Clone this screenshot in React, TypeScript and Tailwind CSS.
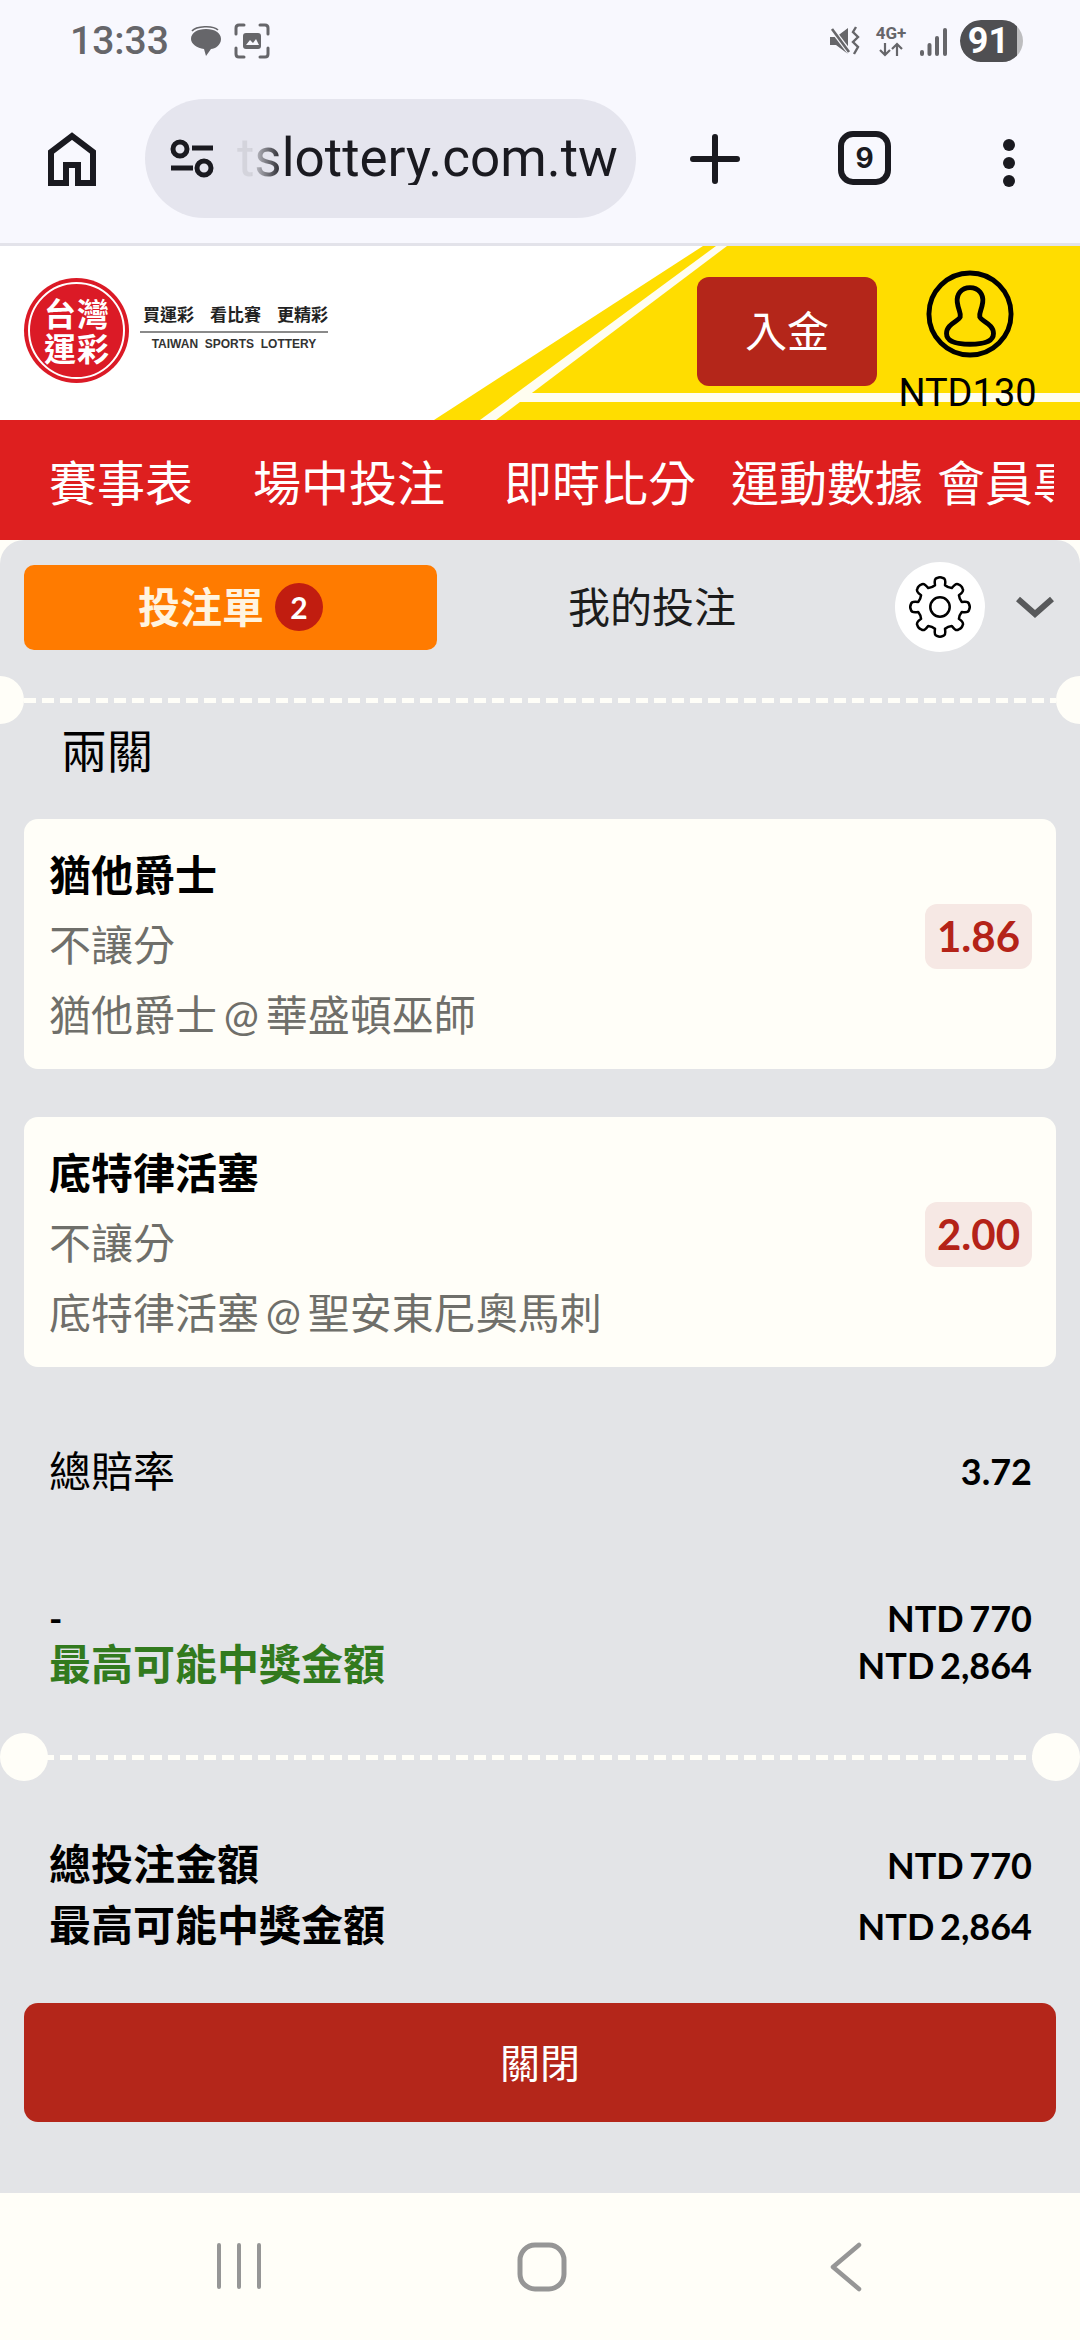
import React from "react";

const gearPath = (() => {
  const c = 34;
  const n = 8;
  let d = "";
  for (let i = 0; i < n; i++) {
    const a = (i * 2 * Math.PI) / n - Math.PI / 2;
    const pt = (r: number, off: number) => {
      const t = a + (off * Math.PI) / 180;
      return `${(c + r * Math.cos(t)).toFixed(2)} ${(c + r * Math.sin(t)).toFixed(2)}`;
    };
    d += (i === 0 ? "M" : "L") + pt(23, -13) + " ";
    d += "Q" + pt(30, -12) + " " + pt(30, -6) + " ";
    d += "Q" + pt(31.5, 0) + " " + pt(30, 6) + " ";
    d += "Q" + pt(30, 12) + " " + pt(23, 13) + " ";
    d += "Q" + pt(21.5, 22.5) + " " + pt(23, 32) + " ";
  }
  return d + "Z";
})();

function Dashed() {
  return (
    <div className="h-[5px] mx-[24px] bg-[repeating-linear-gradient(90deg,#fffef8_0_12px,transparent_12px_18px)]" />
  );
}

function Card({ team, line, odds }: { team: string; line: string; odds: string }) {
  return (
    <div className="mx-[24px] h-[250px] rounded-[14px] bg-[#fffef8] pl-[25px] pr-[24px] pt-[21px] flex justify-between">
      <div>
        <div className="h-[70px] leading-[70px] text-[42px] font-bold text-black">{team}</div>
        <div className="h-[70px] leading-[70px] text-[42px] text-[#6f6f6a]">不讓分</div>
        <div className="h-[70px] leading-[70px] text-[42px] text-[#6f6f6a] [word-spacing:-4px]">{line}</div>
      </div>
      <div className="mt-[64px] h-[65px] w-[107px] rounded-[12px] bg-[#f6e8e4] flex items-center justify-center text-[42px] font-bold text-[#b42318]">
        {odds}
      </div>
    </div>
  );
}

export default function App() {
  return (
    <div className="w-[1080px] h-[2340px] overflow-hidden flex flex-col bg-[#fffef8] font-['Lato','Noto_Sans_CJK_TC',sans-serif]">
      {/* status bar */}
      <div className="h-[62px] shrink-0 bg-[#f8f8fe] flex items-center pl-[70px] pr-[57px] pt-[20px] font-['Roboto',sans-serif] text-[#66666a]">
        <span className="text-[39px] font-medium leading-none">13:33</span>
        <svg className="ml-[20px]" width="34" height="34" viewBox="0 0 34 34">
          <path d="M3 7 C7 2 24 1 29 6" fill="none" stroke="#66666a" strokeWidth="1.6" />
          <path d="M17 5 C26 5 32 9 32 15 C32 21 26 25 22 25 L17 32 L15 25 C8 24 2 20 2 15 C2 9 8 5 17 5Z" fill="#66666a" />
        </svg>
        <svg className="ml-[11px]" width="36" height="36" viewBox="0 0 36 36" fill="none">
          <path d="M2 11 V5 Q2 2 5 2 H10 M26 2 H31 Q34 2 34 5 V11 M34 25 V31 Q34 34 31 34 H26 M10 34 H5 Q2 34 2 31 V25" stroke="#66666a" strokeWidth="3" strokeLinecap="round" />
          <rect x="9" y="10" width="18" height="16" rx="3" fill="#66666a" />
          <path d="M12 22 L16 17 L19 20 L22 16 L25 22Z" fill="#f8f8fe" />
        </svg>
        <div className="flex-1" />
        <svg width="32" height="32" viewBox="0 0 32 32" fill="none">
          <path d="M1 12 H7 L19 3 V29 L7 20 H1Z" fill="#66666a" />
          <path d="M2 3 L21 28" stroke="#f8f8fe" strokeWidth="5" />
          <path d="M3 4 L20 27" stroke="#66666a" strokeWidth="2.6" />
          <path d="M27 2 L24 7 L29 12 L24 17 L29 22 L25 29" stroke="#66666a" strokeWidth="2.4" />
        </svg>
        <div className="ml-[13px] w-[34px] flex flex-col items-center text-[#66666a]">
          <span className="text-[17px] font-bold leading-[17px]">4G+</span>
          <svg width="28" height="15" viewBox="0 0 26 15" fill="none" stroke="#66666a" strokeWidth="2.2">
            <path d="M7 1 V13 M2 8 L7 13 L12 8 M19 14 V2 M14 7 L19 2 L24 7" />
          </svg>
        </div>
        <svg className="ml-[12px]" width="28" height="30" viewBox="0 0 28 30" fill="#66666a">
          <rect x="0" y="24" width="4" height="6" rx="2" />
          <rect x="7.5" y="17" width="4" height="13" rx="2" />
          <rect x="15" y="10" width="4" height="20" rx="2" />
          <rect x="23" y="2" width="4" height="28" rx="2" />
        </svg>
        <div className="ml-[12px] w-[63px] h-[42px] rounded-[21px] bg-[#bdbdbf] overflow-hidden">
          <div className="w-[57px] h-[42px] rounded-l-[21px] bg-[#4f4f52] text-white text-[36px] font-bold leading-[42px] text-center">
            91
          </div>
        </div>
      </div>

      {/* browser toolbar */}
      <div className="h-[181px] shrink-0 bg-[#f8f8fe] flex items-start pt-[37px] text-[#1a1a20]">
        <svg className="ml-[48px] mt-[33px]" width="48" height="54" viewBox="0 0 48 54" fill="none" stroke="#1a1a20" strokeWidth="6">
          <path d="M3 51 V20 L24 4 L45 20 V51 H30 V33 H18 V51Z" />
        </svg>
        <div className="ml-[49px] w-[491px] h-[119px] rounded-full bg-[#e5e5ee] flex items-center pl-[24px] overflow-hidden">
          <svg className="shrink-0" width="46" height="40" viewBox="0 0 46 40" fill="none" stroke="#1a1a20" strokeWidth="5">
            <circle cx="11" cy="10" r="7" />
            <path d="M23 9 H44 M2 29 H24" />
            <circle cx="35" cy="29" r="7" />
          </svg>
          <span className="ml-[22px] font-['Roboto',sans-serif] text-[53px] leading-none whitespace-nowrap bg-[linear-gradient(90deg,#d4d4dc_0,#d4d4dc_14px,#1a1a20_46px)] bg-clip-text text-transparent">
            tslottery.com.tw
          </span>
        </div>
        <svg className="ml-[54px] mt-[35px]" width="50" height="50" viewBox="0 0 50 50" fill="none" stroke="#1a1a20" strokeWidth="6" strokeLinecap="round">
          <path d="M25 3 V47 M3 25 H47" />
        </svg>
        <div className="ml-[98px] mt-[32px] w-[53px] h-[54px] rounded-[15px] border-[6px] border-[#1a1a20] flex items-center justify-center font-['Inter',sans-serif] font-bold text-[28px] leading-none">
          9
        </div>
        <div className="ml-[112px] mt-[40px] flex flex-col gap-[6px]">
          <div className="w-[12px] h-[12px] rounded-full bg-[#1a1a20]" />
          <div className="w-[12px] h-[12px] rounded-full bg-[#1a1a20]" />
          <div className="w-[12px] h-[12px] rounded-full bg-[#1a1a20]" />
        </div>
      </div>
      <div className="h-[3px] shrink-0 bg-[#e3e3ea]" />

      {/* site header */}
      <div className="relative h-[174px] shrink-0 bg-white flex items-start">
        <svg className="absolute inset-0" width="1080" height="174" viewBox="0 0 1080 174">
          <path d="M703 0 H1080 V174 H434Z" fill="#ffdd00" />
          <path d="M716 0 H727 L496 174 H480Z" fill="#fffdf0" />
          <path d="M529 147 H1080 V156 H517Z" fill="#fffdf0" />
        </svg>
        <div className="relative mt-[32px] ml-[24px] w-[105px] h-[105px] rounded-full bg-[#db1a26] flex items-center justify-center">
          <div className="absolute inset-[4px] rounded-full border-[2px] border-white" />
          <div className="grid grid-cols-[33px_33px] text-white font-bold text-[32px] leading-[35px] text-center">
            <span>台</span>
            <span>灣</span>
            <span>運</span>
            <span>彩</span>
          </div>
        </div>
        <div className="relative ml-[11px] mt-[58px] w-[188px] font-['Liberation_Sans','Noto_Sans_CJK_TC',sans-serif]">
          <div className="text-[17px] font-bold leading-[24px] text-[#222] whitespace-nowrap pl-[3px]">
            <span>買運彩</span>
            <span className="ml-[16px]">看比賽</span>
            <span className="ml-[16px]">更精彩</span>
          </div>
          <div className="h-[2px] mt-[3px] bg-[#8a8a8a]" />
          <div className="text-[12px] font-bold leading-[22px] text-[#333] text-center whitespace-pre">TAIWAN  SPORTS  LOTTERY</div>
        </div>
        <div className="relative ml-[369px] mt-[31px] w-[180px] h-[109px] rounded-[12px] bg-[#b4261a] text-white text-[42px] flex items-center justify-center">
          入金
        </div>
        <div className="relative ml-[22px] w-[137px] flex flex-col items-center">
          <svg className="mt-[24px] ml-[5px]" width="88" height="88" viewBox="0 0 90 90" fill="none" stroke="#000" strokeWidth="5">
            <circle cx="45" cy="45" r="42" />
            <path d="M45 18 C36 18 31 25 32 33 C33 41 36 44 35 48 C33 53 21 55 21 65 C21 73 31 76 45 76 C59 76 69 73 69 65 C69 55 57 53 55 48 C54 44 57 41 58 33 C59 25 54 18 45 18Z" />
          </svg>
          <span className="mt-[13px] font-['Roboto',sans-serif] text-[38px] leading-[44px] text-black">NTD130</span>
        </div>
      </div>

      {/* red nav */}
      <div className="h-[120px] shrink-0 bg-[#de1f1f] pr-[26px]">
        <div className="h-full overflow-hidden flex items-center whitespace-nowrap text-[48px] text-white pt-[5px]">
          <span className="ml-[49px] shrink-0">賽事表</span>
          <span className="ml-[60px] shrink-0">場中投注</span>
          <span className="ml-[59px] shrink-0">即時比分</span>
          <span className="ml-[35px] shrink-0">運動數據</span>
          <span className="ml-[14px] shrink-0">會員專區</span>
        </div>
      </div>

      {/* bet slip panel */}
      <div className="relative flex-1 min-h-0 overflow-hidden rounded-t-[24px] bg-[#e3e4e7]">
        <div className="flex items-center pl-[24px] pt-[22px] h-[112px]">
          <div className="w-[413px] h-[85px] rounded-[10px] bg-[#ff7b00] flex items-center justify-center gap-[11px] text-[#fff4e0] text-[42px] font-bold">
            投注單
            <span className="w-[48px] h-[48px] rounded-full bg-[#c11d10] text-white text-[30px] flex items-center justify-center">
              2
            </span>
          </div>
          <div className="ml-[131px] text-[42px] text-[#1c1c1c]">我的投注</div>
          <div className="ml-[159px] w-[90px] h-[90px] rounded-full bg-white flex items-center justify-center">
            <svg width="66" height="66" viewBox="0 0 68 68" fill="none" stroke="#000" strokeWidth="2.6" strokeLinejoin="round">
              <path d={gearPath} />
              <circle cx="34" cy="34" r="10" />
            </svg>
          </div>
          <svg className="ml-[31px]" width="38" height="24" viewBox="0 0 38 24" fill="none" stroke="#58595b" strokeWidth="6">
            <path d="M2 4 L19 19 L36 4" />
          </svg>
        </div>

        {/* ticket notches */}
        <div className="absolute left-[-24px] top-[136px] w-[48px] h-[48px] rounded-full bg-[#fffef8]" />
        <div className="absolute right-[-24px] top-[136px] w-[48px] h-[48px] rounded-full bg-[#fffef8]" />

        <div className="mt-[46px]">
          <Dashed />
        </div>
        <div className="ml-[61px] mt-[18px] mb-[38px] h-[60px] leading-[60px] text-[46px] text-black">兩關</div>
        <Card team="猶他爵士" line="猶他爵士 @ 華盛頓巫師" odds="1.86" />
        <div className="mt-[48px]">
          <Card team="底特律活塞" line="底特律活塞 @ 聖安東尼奧馬刺" odds="2.00" />
        </div>

        <div className="mt-[74px] ml-[49px] mr-[48px] h-[60px] flex items-center justify-between">
          <span className="text-[42px] text-black">總賠率</span>
          <span className="text-[36px] font-bold text-black">3.72</span>
        </div>

        <div className="mt-[93px] ml-[49px] mr-[48px]">
          <div className="h-[47px] flex items-center justify-between text-[36px] font-bold text-black [word-spacing:-3px]">
            <span>-</span>
            <span>NTD 770</span>
          </div>
          <div className="h-[47px] flex items-center justify-between">
            <span className="text-[42px] font-bold text-[#327a1e]">最高可能中獎金額</span>
            <span className="text-[36px] font-bold text-black [word-spacing:-3px]">NTD 2,864</span>
          </div>
        </div>

        <div className="relative mt-[67px]">
          <div className="absolute left-0 top-[-22px] w-[48px] h-[48px] rounded-full bg-[#fffef8]" />
          <div className="absolute right-0 top-[-22px] w-[48px] h-[48px] rounded-full bg-[#fffef8]" />
          <Dashed />
        </div>

        <div className="mt-[74px] ml-[49px] mr-[48px]">
          <div className="h-[61px] flex items-center justify-between">
            <span className="text-[42px] font-bold text-black">總投注金額</span>
            <span className="text-[36px] font-bold text-black [word-spacing:-3px]">NTD 770</span>
          </div>
          <div className="h-[61px] flex items-center justify-between">
            <span className="text-[42px] font-bold text-black">最高可能中獎金額</span>
            <span className="text-[36px] font-bold text-black [word-spacing:-3px]">NTD 2,864</span>
          </div>
        </div>

        <div className="mt-[47px] mx-[24px] h-[119px] rounded-[14px] bg-[#b4261a] flex items-center justify-center text-[40px] text-white">
          關閉
        </div>
      </div>

      {/* android nav */}
      <div className="h-[147px] shrink-0 bg-[#fffef8] flex items-start pt-[49px]">
        <svg className="ml-[216px]" width="46" height="48" viewBox="0 0 46 48" fill="none" stroke="#969696" strokeWidth="4" strokeLinecap="round">
          <path d="M3 3 V45 M23 3 V45 M43 3 V45" />
        </svg>
        <svg className="ml-[255px]" width="50" height="50" viewBox="0 0 50 50" fill="none" stroke="#969696" strokeWidth="5">
          <rect x="3" y="3" width="44" height="44" rx="15" />
        </svg>
        <svg className="ml-[262px]" width="34" height="50" viewBox="0 0 34 50" fill="none" stroke="#969696" strokeWidth="4.5" strokeLinecap="round" strokeLinejoin="round">
          <path d="M30 3 L4 25 L30 47" />
        </svg>
      </div>
    </div>
  );
}
